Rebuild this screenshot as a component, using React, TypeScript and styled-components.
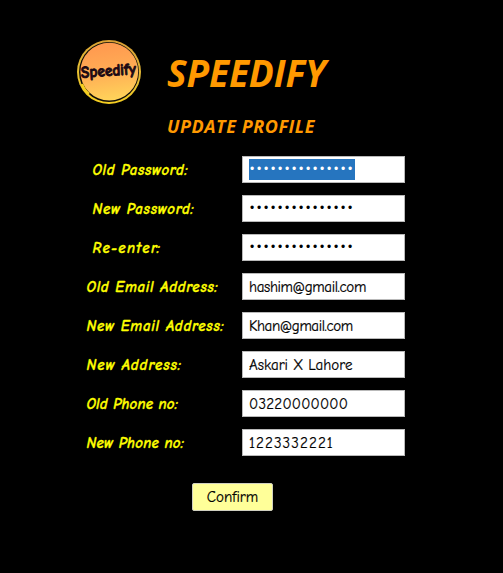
import React from "react";
import styled, { createGlobalStyle } from "styled-components";

const comic = `"Comic Sans MS", "Comic Neue", "Open Sans", sans-serif`;

const GlobalStyle = createGlobalStyle`
  * { box-sizing: border-box; }
  body { margin: 0; background: #000; overflow: hidden; }
`;

const Page = styled.main`
  width: 503px;
  height: 573px;
  background: #000;
  overflow: hidden;
`;

const Header = styled.header`
  display: flex;
  height: 156px;
  padding: 39px 0 0 76px;
  gap: 25px;
`;

const Logo = styled.svg`
  flex: none;
  width: 66px;
  height: 66px;
  overflow: visible;
`;

const Titles = styled.div`
  display: flex;
  flex-direction: column;
  color: #ff9900;
  font-family: "Open Sans", sans-serif;
  font-style: italic;
  font-weight: 700;
  white-space: nowrap;
`;

const Brand = styled.h1`
  margin: 9px 0 0;
  font-size: 37px;
  line-height: 50px;
  letter-spacing: -0.1px;
`;

const Subtitle = styled.h2`
  margin: 15px 0 0;
  font-size: 18px;
  line-height: 26px;
  letter-spacing: 0.55px;
`;

const Fields = styled.div`
  display: grid;
  grid-auto-rows: 27px;
  row-gap: 12px;
`;

const Row = styled.label<{ $indent: number }>`
  display: grid;
  grid-template-columns: ${(p) => 242 - p.$indent}px 163px;
  padding-left: ${(p) => p.$indent}px;
`;

const Caption = styled.span<{ $tracking: number }>`
  padding-left: 0.5px;
  color: #ffff00;
  font: italic 700 15px/29px ${comic};
  -webkit-text-stroke: 0.3px #ffff00;
  letter-spacing: ${(p) => p.$tracking}px;
  white-space: nowrap;
`;

const Field = styled.span`
  display: flex;
  align-items: center;
  height: 27px;
  padding-left: 6px;
  border: 1px solid #b9b9b9;
  background: #fff;
`;

const Value = styled.span<{ $tracking: number }>`
  padding-top: 2px;
  color: #000;
  font: 400 15px/25px ${comic};
  -webkit-text-stroke: 0.2px #000;
  letter-spacing: ${(p) => p.$tracking}px;
  white-space: nowrap;
`;

const Mask = styled.span<{ $selected?: boolean }>`
  height: 21px;
  width: 106px;
  padding-left: 1px;
  color: ${(p) => (p.$selected ? "#fff" : "#000")};
  background: ${(p) => (p.$selected ? "#2675bf" : "transparent")};
  font: 12px/21px "Liberation Sans", sans-serif;
  letter-spacing: 2.8px;
  white-space: nowrap;
  overflow: hidden;
`;

const Actions = styled.div`
  padding: 27px 0 0 192px;
`;

const Confirm = styled.button`
  display: block;
  width: 81px;
  height: 28px;
  padding: 0;
  border: 1px solid #cfcfc0;
  border-radius: 2px;
  background: #ffff99;
  color: #000;
  font: 400 15px/26px ${comic};
  -webkit-text-stroke: 0.2px #000;
`;

type Entry = {
  label: string;
  tracking: number;
  indent: number;
  value?: string;
  valueTracking?: number;
  selected?: boolean;
};

const entries: Entry[] = [
  { label: "Old Password:", tracking: 0.6, indent: 92, selected: true },
  { label: "New Password:", tracking: 0.68, indent: 92 },
  { label: "Re-enter:", tracking: 1.2, indent: 92 },
  { label: "Old Email Address:", tracking: 0.64, indent: 86, value: "hashim@gmail.com", valueTracking: -0.38 },
  { label: "New Email Address:", tracking: 0.69, indent: 86, value: "Khan@gmail.com", valueTracking: -0.42 },
  { label: "New Address:", tracking: 0.92, indent: 86, value: "Askari X Lahore", valueTracking: 0 },
  { label: "Old Phone no:", tracking: 0.1, indent: 86, value: "03220000000", valueTracking: 0.25 },
  { label: "New Phone no:", tracking: 0.17, indent: 86, value: "1223332221", valueTracking: 1.1 },
];

export default function App() {
  return (
    <Page>
      <GlobalStyle />
      <Header>
        <Logo viewBox="0 0 66 66" aria-label="Speedify">
          <defs>
            <linearGradient id="sun" x1="0.4" y1="0" x2="0.55" y2="1">
              <stop offset="0" stopColor="#ff984f" />
              <stop offset="0.5" stopColor="#ffad55" />
              <stop offset="1" stopColor="#ffd45a" />
            </linearGradient>
            <linearGradient id="rim" x1="0.6" y1="0" x2="0.4" y2="1">
              <stop offset="0" stopColor="#d99f35" />
              <stop offset="0.5" stopColor="#e5bd35" />
              <stop offset="1" stopColor="#f6cf20" />
            </linearGradient>
          </defs>
          <circle cx="33" cy="33" r="32" fill="url(#rim)" />
          <circle cx="33" cy="33" r="30" fill="#100d08" />
          <circle cx="33.3" cy="32.6" r="28.9" fill="url(#sun)" />
          <path d="M6 45 Q8 51 13 55" fill="none" stroke="#f6cf20" strokeWidth="2.4" />
          <text
            x="32.5"
            y="37"
            transform="rotate(-4 33 33)"
            textAnchor="middle"
            textLength="55"
            lengthAdjust="spacingAndGlyphs"
            fontFamily="Comic Neue, Open Sans, sans-serif"
            fontSize="16.5"
            fontWeight="700"
            fill="#1b0914"
            stroke="#1b0914"
            strokeWidth="0.9"
          >
            Speedify
          </text>
        </Logo>
        <Titles>
          <Brand>SPEEDIFY</Brand>
          <Subtitle>UPDATE PROFILE</Subtitle>
        </Titles>
      </Header>
      <Fields>
        {entries.map((e) => (
          <Row key={e.label} $indent={e.indent}>
            <Caption $tracking={e.tracking}>{e.label}</Caption>
            <Field>
              {e.value ? (
                <Value $tracking={e.valueTracking ?? 0}>{e.value}</Value>
              ) : (
                <Mask $selected={e.selected}>{"•".repeat(15)}</Mask>
              )}
            </Field>
          </Row>
        ))}
      </Fields>
      <Actions>
        <Confirm>Confirm</Confirm>
      </Actions>
    </Page>
  );
}
